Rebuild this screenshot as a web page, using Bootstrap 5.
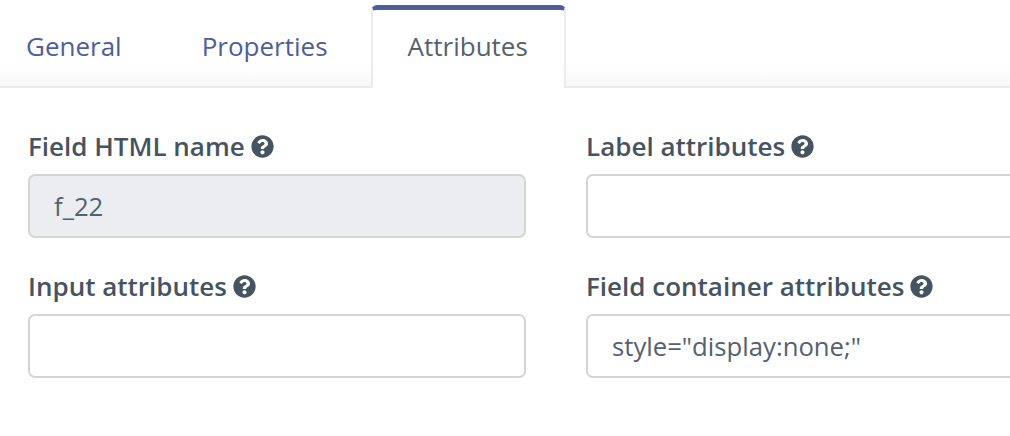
<!DOCTYPE html>
<html lang="en">
<head>
<meta charset="utf-8">
<title>Field attributes</title>
<link href="https://cdn.jsdelivr.net/npm/bootstrap@5.3.0/dist/css/bootstrap.min.css" rel="stylesheet">
<style>
html,body{height:100%;overflow:hidden;background:#fff;}
body{font-family:"Open Sans","Noto Sans",sans-serif;color:#4e5d6c;}
.tab-strip{margin-top:5px;height:83px;border-bottom:2px solid #ebebf1;background:linear-gradient(to bottom,#fff 0,#fff 75%,#f8f8fa 100%);flex-wrap:nowrap;}
.tab-strip .nav-link{font-size:26px;line-height:34px;color:#4e5d9c;border:0;border-radius:0;background:transparent;margin:0;padding:24px 26px 23px;height:81px;}
.tab-strip .tab-one{padding-right:54px;}
.tab-strip .tab-two{padding-right:16px;}
.tab-strip .nav-item:last-child{margin-left:27px;}
.tab-strip .nav-link.active{width:195px;height:83px;padding:19px 0 0 35px;color:#54616f;background:#fff;border:2px solid #ebebf1;border-top:5px solid #4e5d9c;border-bottom:0;border-radius:6px 6px 0 0;margin-bottom:-2px;}
.form-area{display:grid;grid-template-columns:498px 498px;column-gap:60px;row-gap:31px;padding:41px 0 0 28px;width:1200px;}
.field-label{display:flex;align-items:center;gap:6px;font-size:26px;line-height:34px;font-weight:600;color:#465361;margin-bottom:11px;white-space:nowrap;}
.field-label svg{width:23px;height:23px;flex:none;}
.form-control.field-input{height:64px;font-size:25.7px;line-height:34px;padding:12px 24px;border:2px solid #d5d5d5;border-radius:7px;color:#54616f;box-shadow:none;}
.form-control.field-input[readonly]{background:#ebedf0;}
</style>
</head>
<body>
<ul class="nav nav-tabs tab-strip">
  <li class="nav-item"><a class="nav-link tab-one" href="#">General</a></li>
  <li class="nav-item"><a class="nav-link tab-two" href="#">Properties</a></li>
  <li class="nav-item"><a class="nav-link active" href="#">Attributes</a></li>
</ul>
<svg width="0" height="0" class="position-absolute">
  <symbol id="help" viewBox="0 0 512 512"><path fill="#465361" d="M504 256c0 137-111 248-248 248S8 393 8 256 119 8 256 8s248 111 248 248zM262.700 90c-54.500 0-89.300 23-116.600 63.800-3.500 5.300-2.400 12.400 2.700 16.300l34.700 26.300c5.200 3.900 12.600 3 16.700-2.100 17.900-22.700 30.100-35.800 57.300-35.800 20.400 0 45.700 13.100 45.700 33 0 15-12.400 22.700-32.600 34-23.600 13.200-54.800 29.700-54.800 70.900V300c0 6.600 5.400 12 12 12h56c6.600 0 12-5.400 12-12v-1.300c0-28.600 83.500-29.800 83.500-107.100C379 133.300 318.500 90 262.700 90zM256 339c-25.400 0-46 20.600-46 46s20.600 46 46 46 46-20.600 46-46-20.600-46-46-46z"/></symbol>
</svg>
<div class="form-area">
  <div>
    <label class="field-label">Field HTML name <svg><use href="#help"/></svg></label>
    <input class="form-control field-input" type="text" value="f_22" readonly>
  </div>
  <div>
    <label class="field-label">Label attributes <svg><use href="#help"/></svg></label>
    <input class="form-control field-input" type="text">
  </div>
  <div>
    <label class="field-label">Input attributes <svg><use href="#help"/></svg></label>
    <input class="form-control field-input" type="text">
  </div>
  <div>
    <label class="field-label">Field container attributes <svg><use href="#help"/></svg></label>
    <input class="form-control field-input" type="text" value='style="display:none;"'>
  </div>
</div>
<script src="https://cdn.jsdelivr.net/npm/bootstrap@5.3.0/dist/js/bootstrap.bundle.min.js"></script>
</body>
</html>
